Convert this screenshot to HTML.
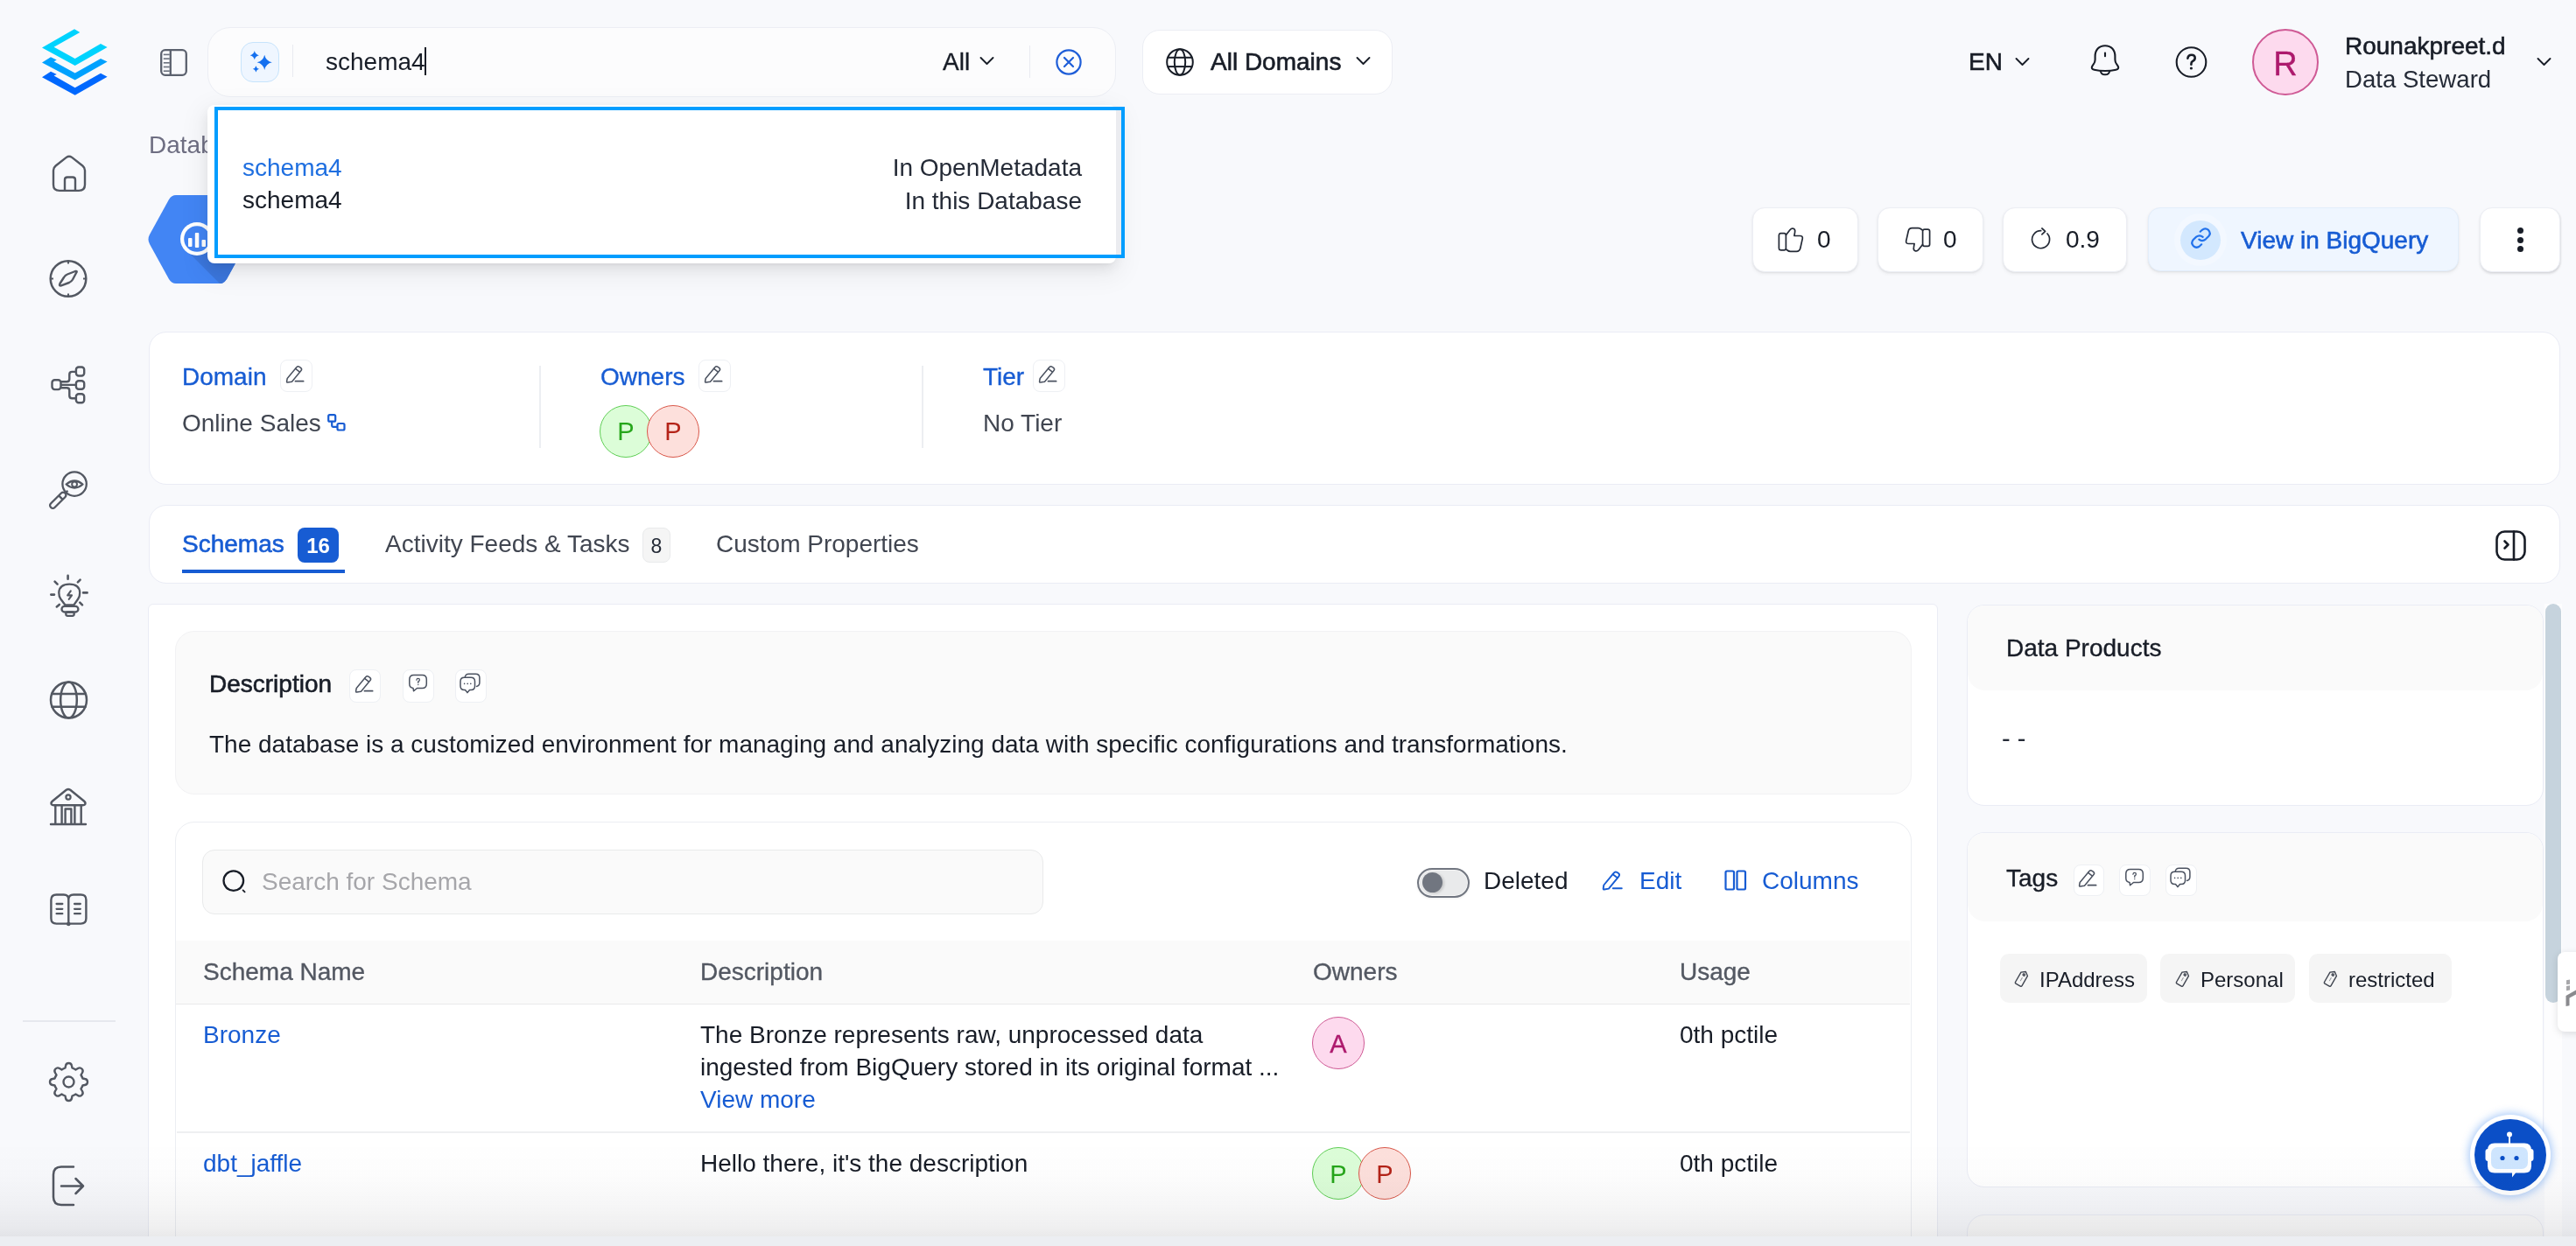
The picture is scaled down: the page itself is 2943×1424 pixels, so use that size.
<!DOCTYPE html>
<html><head><meta charset="utf-8">
<style>
*{box-sizing:border-box;margin:0;padding:0}
html,body{width:2943px;height:1424px;overflow:hidden;background:#f8f9fc;font-family:"Liberation Sans",sans-serif;color:#181d27}
.a{position:absolute}
.t{position:absolute;white-space:nowrap;font-size:28px;line-height:28px;will-change:transform;margin-top:0.8px}
.sb{-webkit-text-stroke:0.6px currentColor}
.md{-webkit-text-stroke:0.35px currentColor}
.card{position:absolute;background:#fff;border:1.5px solid #eaecf5;border-radius:20px}
.ib{position:absolute;background:#fff;border:1.5px solid #eef0f4;border-radius:8px}
svg{position:absolute;overflow:visible}
</style></head><body>

<!-- ============ SIDEBAR ============ -->
<svg style="left:48px;top:33px" width="76" height="77" viewBox="0 0 76 77">
  <path d="M37 0.3 L43.3 3.9 L13.6 20.7 L37.7 34 L67 17.1 L74.6 21.1 L37.7 42 L0 21.5 Z" fill="#00d3fe"/>
  <path d="M10 32.3 L16.8 35.6 L13.6 37.2 L37.7 50.4 L67 34 L74.6 37.6 L37.7 58.4 L0 38.4 Z" fill="#00a1fe"/>
  <path d="M10 48.8 L16.8 52 L13.6 53.6 L37.7 67.3 L67 50.8 L74.6 54.8 L37.7 75.7 L0 55.2 Z" fill="#0068fe"/>
</svg>

<!-- panel toggle -->
<svg style="left:183px;top:56px" width="31" height="31" viewBox="0 0 31 31" fill="none" stroke="#5b616e" stroke-width="2.3">
  <rect x="1.2" y="1.2" width="28.6" height="28.6" rx="4.5"/>
  <line x1="11.8" y1="1.2" x2="11.8" y2="29.8"/>
  <g stroke-width="1.6" stroke="#6b717d"><line x1="3.8" y1="6.4" x2="10.8" y2="6.4"/><line x1="3.8" y1="11.1" x2="10.8" y2="11.1"/><line x1="3.8" y1="15.8" x2="10.8" y2="15.8"/><line x1="3.8" y1="20.5" x2="10.8" y2="20.5"/><line x1="3.8" y1="25.2" x2="10.8" y2="25.2"/></g>
</svg>

<!-- ============ TOP BAR ============ -->
<div class="a" style="left:237px;top:31px;width:1038px;height:80px;background:#fcfcfd;border:1.5px solid #eceef4;border-radius:26px"></div>
<div class="a" style="left:275px;top:48px;width:44px;height:46px;background:#eff6ff;border:1.5px solid #c7e4fc;border-radius:14px"></div>
<svg style="left:275px;top:48px" width="44" height="46" viewBox="0 0 44 46"><path d="M27.2 14.700000000000001 Q28.747999999999998 21.752000000000002 35.8 23.3 Q28.747999999999998 24.848 27.2 31.9 Q25.652 24.848 18.6 23.3 Q25.652 21.752000000000002 27.2 14.700000000000001Z M15.8 10.1 Q16.718 14.282 20.9 15.2 Q16.718 16.118 15.8 20.299999999999997 Q14.882000000000001 16.118 10.700000000000001 15.2 Q14.882000000000001 14.282 15.8 10.1Z M17.4 27.2 Q18.048 30.152 21.0 30.8 Q18.048 31.448 17.4 34.4 Q16.752 31.448 13.799999999999999 30.8 Q16.752 30.152 17.4 27.2Z" fill="#1570ef"/></svg>
<div class="a" style="left:333.5px;top:51px;width:1.5px;height:37px;background:#e9eaf0"></div>
<div class="t" style="left:372px;top:55.9px;color:#181d27">schema4</div>
<div class="a" style="left:485.2px;top:54px;width:1.8px;height:32px;background:#181d27"></div>

<div class="t md" style="left:1077px;top:56px;color:#181d27">All</div>
<svg style="left:1119px;top:64px" width="18" height="11" viewBox="0 0 18 11" fill="none" stroke="#181d27" stroke-width="1.9" stroke-linecap="round" stroke-linejoin="round"><path d="M1.5 2 L8.5 9 L15.5 2"/></svg>
<div class="a" style="left:1175.5px;top:52px;width:1.5px;height:37px;background:#e9eaf0"></div>
<svg style="left:1206px;top:56px" width="30" height="30" viewBox="0 0 30 30" fill="none" stroke="#1f5ed8" stroke-width="2.2" stroke-linecap="round"><circle cx="15" cy="15" r="13.6"/><path d="M10 10 L20 20 M20 10 L10 20"/></svg>

<div class="a" style="left:1305px;top:34px;width:286px;height:74px;background:#fff;border:1.5px solid #eceef4;border-radius:20px"></div>
<svg style="left:1332px;top:55px" width="32" height="32" viewBox="0 0 32 32" fill="none" stroke="#181d27" stroke-width="2"><circle cx="16" cy="16" r="14.8"/><ellipse cx="16" cy="16" rx="6.2" ry="14.8"/><line x1="2" y1="10.8" x2="30" y2="10.8"/><line x1="2" y1="21.1" x2="30" y2="21.1"/></svg>
<div class="t sb" style="left:1383px;top:56.7px;color:#181d27">All Domains</div>
<svg style="left:1549px;top:64px" width="18" height="11" viewBox="0 0 18 11" fill="none" stroke="#181d27" stroke-width="1.9" stroke-linecap="round" stroke-linejoin="round"><path d="M1.5 2 L8.5 9 L15.5 2"/></svg>

<div class="t sb" style="left:2249px;top:56.3px;color:#181d27">EN</div>
<svg style="left:2302px;top:65px" width="18" height="11" viewBox="0 0 18 11" fill="none" stroke="#181d27" stroke-width="1.9" stroke-linecap="round" stroke-linejoin="round"><path d="M1.5 2 L8.5 9 L15.5 2"/></svg>
<svg style="left:2388px;top:51px" width="34" height="36" viewBox="0 0 34 36" fill="none" stroke="#181d27" stroke-width="2.1" stroke-linejoin="round" stroke-linecap="round"><path d="M17 1.3 C10 1.3 5.6 6 5.6 13.5 V17.3 Q5.6 20 3.8 22.3 L2.3 24.6 Q0.6 27.8 4.6 28.7 Q10 30 17 30 Q24 30 29.4 28.7 Q33.4 27.8 31.7 24.6 L30.2 22.3 Q28.4 20 28.4 17.3 V13.5 C28.4 6 24 1.3 17 1.3Z"/><path d="M11.8 30 Q12.3 34.3 17 34.3 Q21.7 34.3 22.2 30"/><path d="M17 9.6 V13.2"/></svg>
<svg style="left:2485px;top:53px" width="37" height="37" viewBox="0 0 37 37" fill="none" stroke="#181d27" stroke-width="2.1"><circle cx="18.5" cy="18" r="16.8"/><path d="M14.4 13.6 Q15 9.8 18.7 9.8 Q22.7 9.8 22.7 13.3 Q22.7 15.8 19.8 17.2 Q18.4 18 18.4 20.2 V20.8" stroke-width="2.6" stroke-linecap="round" stroke-linejoin="round"/><circle cx="18.4" cy="25" r="1.6" fill="#181d27" stroke="none"/></svg>
<div class="a" style="left:2573px;top:33px;width:76px;height:76px;border-radius:50%;background:#fddaee;border:2px solid #cf5a95"></div>
<div class="t md" style="left:2573px;width:76px;text-align:center;top:53.5px;font-size:38px;line-height:38px;color:#ad1a6d">R</div>
<div class="t sb" style="left:2679px;top:38.6px;color:#181d27">Rounakpreet.d</div>
<div class="t" style="left:2679px;top:76px;font-size:27.6px;color:#252b37">Data Steward</div>
<svg style="left:2898px;top:65px" width="18" height="11" viewBox="0 0 18 11" fill="none" stroke="#181d27" stroke-width="1.9" stroke-linecap="round" stroke-linejoin="round"><path d="M1.5 2 L8.5 9 L15.5 2"/></svg>


<!-- ============ HEADER ============ -->
<div class="t" style="left:170px;top:151px;color:#6e6e82">Databases</div>
<svg style="left:169px;top:223px" width="114" height="101" viewBox="0 0 114 101">
  <defs><clipPath id="hx"><path d="M32 0 H82 Q87 0 90 5 L112 45 Q115 50.5 112 56 L90 96 Q87 101 82 101 H32 Q27 101 24 96 L2 56 Q-1 50.5 2 45 L24 5 Q27 0 32 0Z"/></clipPath></defs>
  <g clip-path="url(#hx)">
  <rect x="0" y="0" width="114" height="101" fill="#4285f4"/>
  <path d="M47 66 L82 101 H120 V40 L72 40 Z" fill="#3b76dc"/>
  </g>
  <circle cx="56" cy="50" r="19" fill="#fff"/>
  <circle cx="56" cy="50" r="14.8" fill="#4285f4"/>
  <rect x="46" y="49" width="4.5" height="10" rx="1" fill="#fff"/><rect x="53.8" y="43" width="4.5" height="17" rx="1" fill="#fff"/><rect x="61.5" y="51" width="4.5" height="8" rx="1" fill="#fff"/>
</svg>

<!-- dropdown -->
<div class="a" style="left:237px;top:120px;width:1038px;height:181px;background:#fff;border-radius:8px;box-shadow:0 6px 16px rgba(0,0,0,0.08),0 3px 6px -4px rgba(0,0,0,0.12),0 9px 28px 8px rgba(0,0,0,0.05)"></div>
<div class="a" style="left:1275px;top:126px;width:6px;height:165px;background:#ebecf0"></div>
<div class="a" style="left:245px;top:122px;width:1040px;height:173px;border:4px solid #009dff"></div>
<div class="t" style="left:277px;top:177px;color:#1f6fe0">schema4</div>
<div class="t" style="left:277px;top:214.3px;color:#181d27">schema4</div>
<div class="t" style="left:900px;width:336px;text-align:right;top:177.3px;color:#252b37">In OpenMetadata</div>
<div class="t" style="left:900px;width:336px;text-align:right;top:214.9px;color:#252b37">In this Database</div>

<!-- action buttons -->
<div class="a" style="left:2001.5px;top:237px;width:121px;height:73.5px;background:#fff;border:1.5px solid #eceef4;border-radius:14px;box-shadow:0 1px 2px rgba(10,13,18,0.06),0 2px 4px rgba(10,13,18,0.06)"></div>
<svg style="left:2031px;top:259px" width="31" height="30" viewBox="0 0 31 30" fill="none" stroke="#252b37" stroke-width="1.7" stroke-linejoin="round" stroke-linecap="round"><rect x="1.4" y="7.6" width="8" height="19.3" rx="2.2"/><path d="M9.5 9.5 L14 3.8 Q15.8 1.5 18 2.3 Q20.3 3.3 19.6 6.3 L18.9 10.5 H25.3 Q28.8 10.5 28.3 13.6 L25.8 24.8 Q25 28.3 21.5 28.3 H14.5 Q12.5 28.3 11 27 L9.5 25.8"/></svg>
<div class="t" style="left:2076px;top:259.3px;color:#181d27">0</div>
<div class="a" style="left:2145px;top:237px;width:120.5px;height:73.5px;background:#fff;border:1.5px solid #eceef4;border-radius:14px;box-shadow:0 1px 2px rgba(10,13,18,0.06),0 2px 4px rgba(10,13,18,0.06)"></div>
<svg style="left:2175px;top:259px" width="31" height="30" viewBox="0 0 31 30" fill="none" stroke="#252b37" stroke-width="1.7" stroke-linejoin="round" stroke-linecap="round"><g transform="translate(31,30) rotate(180)"><rect x="1.4" y="7.6" width="8" height="19.3" rx="2.2"/><path d="M9.5 9.5 L14 3.8 Q15.8 1.5 18 2.3 Q20.3 3.3 19.6 6.3 L18.9 10.5 H25.3 Q28.8 10.5 28.3 13.6 L25.8 24.8 Q25 28.3 21.5 28.3 H14.5 Q12.5 28.3 11 27 L9.5 25.8"/></g></svg>
<div class="t" style="left:2220px;top:259.3px;color:#181d27">0</div>
<div class="a" style="left:2288px;top:237px;width:141.5px;height:73.5px;background:#fff;border:1.5px solid #eceef4;border-radius:14px;box-shadow:0 1px 2px rgba(10,13,18,0.06),0 2px 4px rgba(10,13,18,0.06)"></div>
<svg style="left:2319px;top:259px" width="26" height="28" viewBox="0 0 26 28" fill="none" stroke="#252b37" stroke-width="1.7" stroke-linecap="round" stroke-linejoin="round"><path d="M12.7 4.7 A10 10 0 1 0 20 8"/><path d="M13.9 2 L17.6 5.4 L13.9 8.8"/></svg>
<div class="t" style="left:2360px;top:259.3px;color:#181d27">0.9</div>
<div class="a" style="left:2454px;top:237px;width:355px;height:73px;background:#eff6ff;border:1.5px solid #e3eefb;border-radius:14px;box-shadow:0 1px 2px rgba(10,13,18,0.06),0 2px 4px rgba(10,13,18,0.06)"></div>
<div class="a" style="left:2484px;top:244px;width:60px;height:60px;border-radius:50%;background:#f3f8ff"></div>
<div class="a" style="left:2491px;top:251.5px;width:46px;height:45.5px;border-radius:50%;background:#d3e8fe"></div>
<svg style="left:2502px;top:260px" width="25" height="25" viewBox="0 0 25 25" fill="none" stroke="#2272eb" stroke-width="2.2" stroke-linecap="round"><path d="M11.7 4.7 L13.8 2.8 Q17.5 -0.3 21.1 2.9 Q24.3 6.5 21.3 10 L18 13.3 Q14 16.5 10.3 13.7"/><path d="M14.7 10.9 Q11 7.8 7.2 10.7 L3.7 14 Q0.7 17.5 3.9 21.1 Q7.5 24.3 11 21.3 L13.2 19.3"/></svg>
<div class="t sb" style="left:2560px;top:259.9px;color:#175cd3">View in BigQuery</div>
<div class="a" style="left:2833px;top:237px;width:92px;height:73.5px;background:#fff;border:1.5px solid #eceef4;border-radius:14px;box-shadow:0 2px 3px rgba(10,13,18,0.10),1px 1px 2px rgba(10,13,18,0.06)"></div>
<div class="a" style="left:2875.5px;top:260px;width:7px;height:7px;border-radius:50%;background:#181d27"></div>
<div class="a" style="left:2875.5px;top:270.5px;width:7px;height:7px;border-radius:50%;background:#181d27"></div>
<div class="a" style="left:2875.5px;top:281px;width:7px;height:7px;border-radius:50%;background:#181d27"></div>

<!-- ============ SIDEBAR ICONS ============ -->
<svg style="left:56px;top:176px" width="45" height="45" viewBox="0 0 45 45" fill="none" stroke="#535862" stroke-width="2.4" stroke-linejoin="round"><path d="M5 18.8 Q5 15.6 7.6 13.5 L19.8 3.9 Q23 1.5 26.2 3.9 L38.4 13.5 Q41 15.6 41 18.8 V35 Q41 41.9 34.1 41.9 H11.9 Q5 41.9 5 35 Z"/><path d="M18 41.9 V29.5 Q18 26.5 21 26.5 H27 Q30 26.5 30 29.5 V41.9"/></svg>
<svg style="left:56px;top:296px" width="45" height="45" viewBox="0 0 45 45" fill="none" stroke="#535862" stroke-width="2.5" stroke-linejoin="round"><circle cx="22" cy="22.5" r="20.3"/><path d="M31 16 Q33 13.5 30 14 L21 17.5 Q18.5 18.5 17 21 L12.5 28 Q11 31 14 30.3 L23 27 Q25.5 26 27 23.5 Z" stroke-width="2.4"/><path d="M22 2.2 V5.5 M22 39.5 V42.8 M1.7 22.5 H5 M39 22.5 H42.3" stroke-width="2"/></svg>
<svg style="left:56px;top:416px" width="45" height="47" viewBox="0 0 45 47" fill="none" stroke="#535862" stroke-width="2.4" stroke-linejoin="round"><rect x="3.5" y="18.2" width="10" height="10.9" rx="3"/><rect x="30.9" y="3.5" width="9.3" height="10" rx="3"/><rect x="30.9" y="19.2" width="9.3" height="9.6" rx="3"/><rect x="30.9" y="34.3" width="9.3" height="10" rx="3"/><path d="M13.5 23.9 H30.9 M13.5 20.2 H20.3 Q23.3 20.2 23.3 17.2 V11.9 Q23.3 8.9 26.3 8.9 H30.9 M13.5 27.3 H20.3 Q23.3 27.3 23.3 30.3 V36.3 Q23.3 39.3 26.3 39.3 H30.9"/></svg>
<svg style="left:56px;top:537px" width="46" height="46" viewBox="0 0 46 46" fill="none" stroke="#535862" stroke-width="2.3" stroke-linejoin="round"><circle cx="29.1" cy="16.1" r="13.7"/><g transform="rotate(-45 10.6 34.4)"><rect x="-1.4" y="31.2" width="23" height="6.4" rx="3"/><path d="M14.5 31.2 V37.6"/></g><path d="M19.4 25.8 L21.4 23.8"/><path d="M19.6 16.5 Q29.1 8.5 38.6 16.5 Q29.1 24.5 19.6 16.5Z" stroke-width="2.2"/><circle cx="29.1" cy="16.5" r="2.9" stroke-width="2"/></svg>
<svg style="left:56px;top:655px" width="46" height="51" viewBox="0 0 46 51" fill="none" stroke="#535862" stroke-width="2.3" stroke-linejoin="round" stroke-linecap="round"><path d="M18.3 36.3 L13.3 29.5 Q11.2 26.5 11.3 22.3 Q11.8 12.7 23.3 12.7 Q34.8 12.7 35.2 22.3 Q35.3 26.5 33.2 29.5 L28.4 36.3 Z"/><rect x="14.5" y="37.8" width="18.9" height="6.7" rx="3.3"/><rect x="19.3" y="44.5" width="9.4" height="4.3" rx="2"/><path d="M24.8 20.3 L21.2 25.4 H26 L22.7 29.8" stroke-width="2.1"/><path d="M21.6 2.9 V6.8 M6.6 9.6 L9.6 12.6 M35.6 7.7 L32.9 10.4 M2.3 24.6 H6 M39.1 22.4 H43.6 M8.8 38.4 L11.8 35.9 M35.3 33.7 L38 36.4" stroke-width="2.6"/></svg>
<svg style="left:56px;top:778px" width="46" height="46" viewBox="0 0 46 46" fill="none" stroke="#535862" stroke-width="2.5"><circle cx="22.5" cy="22" r="20.5"/><ellipse cx="22.5" cy="22" rx="9.3" ry="20.5"/><line x1="2.5" y1="15" x2="42.5" y2="15"/><line x1="2.5" y1="29.8" x2="42.5" y2="29.8"/></svg>
<svg style="left:56px;top:900px" width="45" height="45" viewBox="0 0 45 45" fill="none" stroke="#535862" stroke-width="2.4" stroke-linejoin="round" stroke-linecap="round"><path d="M4 15.5 Q1.8 17.3 2.8 19.2 Q3.6 20.2 5.5 20.2 H38.5 Q40.4 20.2 41.2 19.2 Q42.2 17.3 40 15.5 L24.3 2.8 Q22 1.3 19.7 2.8 Z"/><circle cx="22" cy="11" r="2.6" stroke-width="2.2"/><path d="M7.3 20.2 V41.5 M14.6 20.2 V41.5 M29.4 20.2 V41.5 M36.7 20.2 V41.5 M2 42 H42"/><path d="M18.6 41.5 V24.5 H25.4 V41.5"/></svg>
<svg style="left:56px;top:1020px" width="46" height="40" viewBox="0 0 46 40" fill="none" stroke="#535862" stroke-width="2.4" stroke-linejoin="round" stroke-linecap="round"><path d="M22.3 35.2 V8 Q22.3 2.5 16.8 2.5 H8.5 Q2.4 2.5 2.4 8.6 V29.5 Q2.4 35.6 8.5 35.6 H36.3 Q42.4 35.6 42.4 29.5 V8.6 Q42.4 2.5 36.3 2.5 H28 Q22.3 2.5 22.3 8"/><path d="M8.6 13 H15.3 M8.6 18.8 H15.3 M8.6 24.2 H15.3 M29.1 13 H35.8 M29.1 18.8 H35.8 M29.1 24.2 H35.8" stroke-width="2.3"/><circle cx="22.3" cy="36" r="2.3" fill="#535862" stroke="none"/></svg>
<div class="a" style="left:26px;top:1166px;width:106px;height:1.5px;background:#e6e8ee"></div>
<svg style="left:55px;top:1213px" width="47" height="47" viewBox="0 0 47 47" fill="none" stroke="#535862" stroke-width="2.4" stroke-linejoin="round"><path d="M23.5 2 Q26.5 2 27 5 L27.5 7.5 Q30 8.5 31.5 9.5 L34 8 Q36.5 6.5 38.5 8.5 Q40.5 10.5 39 13 L37.5 15.5 Q38.5 17 39.5 19.5 L42 20 Q45 20.5 45 23.5 Q45 26.5 42 27 L39.5 27.5 Q38.5 30 37.5 31.5 L39 34 Q40.5 36.5 38.5 38.5 Q36.5 40.5 34 39 L31.5 37.5 Q30 38.5 27.5 39.5 L27 42 Q26.5 45 23.5 45 Q20.5 45 20 42 L19.5 39.5 Q17 38.5 15.5 37.5 L13 39 Q10.5 40.5 8.5 38.5 Q6.5 36.5 8 34 L9.5 31.5 Q8.5 30 7.5 27.5 L5 27 Q2 26.5 2 23.5 Q2 20.5 5 20 L7.5 19.5 Q8.5 17 9.5 15.5 L8 13 Q6.5 10.5 8.5 8.5 Q10.5 6.5 13 8 L15.5 9.5 Q17 8.5 19.5 7.5 L20 5 Q20.5 2 23.5 2Z"/><circle cx="23.5" cy="23.5" r="6"/></svg>
<svg style="left:59px;top:1332px" width="39" height="47" viewBox="0 0 39 47" fill="none" stroke="#535862" stroke-width="2.5" stroke-linecap="round" stroke-linejoin="round"><path d="M25 1.5 H11 Q2 1.5 2 10.5 V36 Q2 45 11 45 H25"/><path d="M11 23.5 H36 M27.5 15 L36 23.5 L27.5 32"/></svg>

<!-- ============ INFO CARD ============ -->
<div class="card" style="left:170px;top:379.3px;width:2755px;height:175px"></div>
<div class="t md" style="left:208px;top:415.8px;color:#175cd3">Domain</div>
<div class="ib" style="left:319.5px;top:411px;width:37px;height:37px"></div>
<svg style="left:324.5px;top:416px" width="26" height="24" viewBox="0 0 26 24" fill="none" stroke="#4b5260" stroke-width="1.5" stroke-linejoin="round" stroke-linecap="round"><path d="M3.2 16.5 L13.8 3.8 Q15.3 2 17.2 3.3 L18.6 4.3 Q20.4 5.8 19 7.6 L8.5 20.3 L3.6 21.1 Q2.5 21.2 2.6 20 Z"/><path d="M12.6 5.3 L17.4 9.1"/><path d="M12.5 19.7 H21.6" stroke-width="1.8"/></svg>
<div class="t" style="left:208px;top:468.9px;color:#414651">Online Sales</div>
<svg style="left:374px;top:473px" width="21" height="20" viewBox="0 0 21 20" fill="none" stroke="#175cd3" stroke-width="2.2" stroke-linejoin="round"><rect x="1.2" y="1.2" width="8" height="7.5" rx="1.5"/><rect x="11.5" y="11" width="8" height="7.5" rx="1.5"/><path d="M5.2 8.7 V13.5 Q5.2 14.8 6.5 14.8 H11.5"/></svg>
<div class="a" style="left:616px;top:418px;width:1.5px;height:94px;background:#eceef2"></div>
<div class="t md" style="left:685.7px;top:415.8px;color:#175cd3">Owners</div>
<div class="ib" style="left:798px;top:411px;width:37px;height:37px"></div>
<svg style="left:803.0px;top:416px" width="26" height="24" viewBox="0 0 26 24" fill="none" stroke="#4b5260" stroke-width="1.5" stroke-linejoin="round" stroke-linecap="round"><path d="M3.2 16.5 L13.8 3.8 Q15.3 2 17.2 3.3 L18.6 4.3 Q20.4 5.8 19 7.6 L8.5 20.3 L3.6 21.1 Q2.5 21.2 2.6 20 Z"/><path d="M12.6 5.3 L17.4 9.1"/><path d="M12.5 19.7 H21.6" stroke-width="1.8"/></svg>
<div class="a" style="left:685px;top:463px;width:60px;height:60px;border-radius:50%;background:#dcfdd8;border:1.5px solid #5fcf55"></div>
<div class="a" style="left:739px;top:463px;width:60px;height:60px;border-radius:50%;background:#fde0dc;border:1.5px solid #d9584a"></div>
<div class="t" style="left:685px;width:60px;text-align:center;top:478px;color:#26a61b;font-size:29px;line-height:29px">P</div>
<div class="t" style="left:739px;width:60px;text-align:center;top:478px;color:#b42318;font-size:29px;line-height:29px">P</div>
<div class="a" style="left:1053px;top:418px;width:1.5px;height:94px;background:#eceef2"></div>
<div class="t md" style="left:1123px;top:415.8px;color:#175cd3">Tier</div>
<div class="ib" style="left:1180px;top:411px;width:37px;height:37px"></div>
<svg style="left:1185.0px;top:416px" width="26" height="24" viewBox="0 0 26 24" fill="none" stroke="#4b5260" stroke-width="1.5" stroke-linejoin="round" stroke-linecap="round"><path d="M3.2 16.5 L13.8 3.8 Q15.3 2 17.2 3.3 L18.6 4.3 Q20.4 5.8 19 7.6 L8.5 20.3 L3.6 21.1 Q2.5 21.2 2.6 20 Z"/><path d="M12.6 5.3 L17.4 9.1"/><path d="M12.5 19.7 H21.6" stroke-width="1.8"/></svg>
<div class="t" style="left:1123px;top:468.9px;color:#414651">No Tier</div>

<!-- ============ TABS ============ -->
<div class="card" style="left:170px;top:577px;width:2755px;height:90px"></div>
<div class="t sb" style="left:208px;top:607.4px;color:#175cd3">Schemas</div>
<div class="a" style="left:340px;top:603px;width:47px;height:40px;border-radius:8px;background:#175cd3"></div>
<div class="t" style="left:340px;width:47px;text-align:center;top:611px;font-weight:bold;font-size:24px;line-height:24px;color:#fff">16</div>
<div class="a" style="left:208px;top:651px;width:186px;height:4px;background:#175cd3"></div>
<div class="t" style="left:440px;top:607.3px;color:#414651">Activity Feeds &amp; Tasks</div>
<div class="a" style="left:733.5px;top:603px;width:32px;height:40px;border-radius:8px;background:#f5f5f5;border:1.5px solid #e9eaeb"></div>
<div class="t" style="left:733.5px;width:32px;text-align:center;top:612px;font-size:23px;line-height:23px;color:#252b37">8</div>
<div class="t" style="left:818px;top:607.3px;color:#414651">Custom Properties</div>
<svg style="left:2851px;top:606px" width="35" height="35" viewBox="0 0 35 35" fill="none" stroke="#181d27" stroke-width="2.6" stroke-linejoin="round" stroke-linecap="round"><rect x="1.5" y="1.5" width="32" height="32" rx="9"/><path d="M21 1.5 V33.5"/><path d="M10.5 12.5 L14.5 16.5 L10.5 20.5"/></svg>

<!-- ============ LEFT CONTENT CARD ============ -->
<div class="a" style="left:169.3px;top:690px;width:2045px;height:760px;background:#fff;border:1.5px solid #eaecf5;border-radius:6px"></div>
<div class="a" style="left:199.5px;top:721px;width:1984px;height:187px;background:#fafafa;border:1.5px solid #f2f2f4;border-radius:22px"></div>
<div class="t sb" style="left:239px;top:767.3px;color:#181d27">Description</div>
<div class="ib" style="left:399px;top:765px;width:36px;height:37.5px"></div><svg style="left:404px;top:770px" width="26" height="24" viewBox="0 0 26 24" fill="none" stroke="#4b5260" stroke-width="1.5" stroke-linejoin="round" stroke-linecap="round"><path d="M3.2 16.5 L13.8 3.8 Q15.3 2 17.2 3.3 L18.6 4.3 Q20.4 5.8 19 7.6 L8.5 20.3 L3.6 21.1 Q2.5 21.2 2.6 20 Z"/><path d="M12.6 5.3 L17.4 9.1"/><path d="M12.5 19.7 H21.6" stroke-width="1.8"/></svg>
<div class="ib" style="left:459.5px;top:765px;width:36.5px;height:37.5px"></div><svg style="left:465px;top:770px" width="26" height="24" viewBox="0 0 26 24" fill="none" stroke="#4b5260" stroke-width="1.5" stroke-linejoin="round" stroke-linecap="round"><path d="M7.8 1.5 H17.3 Q22.3 1.5 22.3 6.5 V11.5 Q22.3 16.5 17.3 16.5 H11.5 L7.6 19.8 L7 16.4 Q2.8 16 2.8 11.5 V6.5 Q2.8 1.5 7.8 1.5Z"/><path d="M10.9 7.2 Q11.1 5.3 12.7 5.3 Q14.4 5.3 14.4 6.9 Q14.4 8.1 12.8 8.9 V10.4" stroke-width="1.3"/><circle cx="12.8" cy="12.5" r="0.7" fill="#4b5260" stroke="none"/></svg>
<div class="ib" style="left:519.5px;top:765px;width:36px;height:37.5px"></div><svg style="left:524px;top:769px" width="26" height="24" viewBox="0 0 26 24" fill="none" stroke="#4b5260" stroke-width="1.5" stroke-linejoin="round" stroke-linecap="round"><path d="M7.2 5.3 Q7.6 1.3 11.6 1.3 H19.4 Q23.9 1.3 23.9 5.8 V11 Q23.9 14.8 20.5 15.4"/><path d="M6.5 5.3 H14 Q18.5 5.3 18.5 9.8 V15 Q18.5 19.5 14 19.5 H12.5 L10 22.6 L7.5 19.5 H6.5 Q2 19.5 2 15 V9.8 Q2 5.3 6.5 5.3Z"/><circle cx="6.6" cy="12.4" r="0.8" fill="#4b5260" stroke="none"/><circle cx="10.2" cy="12.4" r="0.8" fill="#4b5260" stroke="none"/><circle cx="13.8" cy="12.4" r="0.8" fill="#4b5260" stroke="none"/></svg>
<div class="t" style="left:239px;top:835.9px;color:#181d27">The database is a customized environment for managing and analyzing data with specific configurations and transformations.</div>

<!-- table card -->
<div class="a" style="left:199.5px;top:939px;width:1984px;height:520px;background:#fff;border:1.5px solid #eceef2;border-radius:22px"></div>
<div class="a" style="left:231px;top:970.5px;width:961px;height:74px;background:#fafafa;border:1.5px solid #e9eaeb;border-radius:14px"></div>
<svg style="left:254px;top:994px" width="28" height="28" viewBox="0 0 28 28" fill="none" stroke="#181d27" stroke-width="2.3" stroke-linecap="round"><circle cx="12.8" cy="12.6" r="11.3"/><path d="M23.6 23.4 L25.6 25.4" stroke-width="1.8"/></svg>
<div class="t" style="left:299px;top:993px;color:#a6a6aa">Search for Schema</div>
<div class="a" style="left:1619px;top:992px;width:60px;height:34px;border-radius:17px;background:#e9eaeb;border:2px solid #717680;box-shadow:inset 0 0 0 1px #f5f5f5,0 1px 3px rgba(0,0,0,0.08)"></div>
<div class="a" style="left:1625px;top:997px;width:23px;height:23px;border-radius:50%;background:#717680;box-shadow:2px 1px 3px rgba(0,0,0,0.15)"></div>
<div class="t" style="left:1695.2px;top:992.1px;color:#181d27">Deleted</div>
<svg style="left:1829px;top:993px" width="26" height="26" viewBox="0 0 26 26" fill="none" stroke="#175cd3" stroke-width="1.9" stroke-linejoin="round" stroke-linecap="round"><path d="M3.3 18.5 L14.8 4.6 Q16.4 2.6 18.5 4 L20 5.1 Q21.9 6.7 20.4 8.7 L8.9 22.6 L3.8 23.5 Q2.6 23.6 2.7 22.3 Z"/><path d="M13.6 6.2 L18.9 10.3"/><path d="M13.8 22.2 H23.8"/></svg>
<div class="t" style="left:1872.5px;top:992.1px;color:#175cd3">Edit</div>
<svg style="left:1970px;top:994px" width="26" height="24" viewBox="0 0 26 24" fill="none" stroke="#175cd3" stroke-width="2.2" stroke-linejoin="round"><rect x="1.5" y="1.5" width="9.5" height="21" rx="1.5"/><rect x="14.5" y="1.5" width="9.5" height="21" rx="1.5"/></svg>
<div class="t" style="left:2012.5px;top:992.1px;color:#175cd3">Columns</div>

<div class="a" style="left:201px;top:1075px;width:1981px;height:73px;background:#fafafa;border-bottom:1.5px solid #e9eaeb"></div>
<div class="t md" style="left:232px;top:1095.9px;color:#535862">Schema Name</div>
<div class="t md" style="left:800px;top:1095.9px;color:#535862">Description</div>
<div class="t md" style="left:1500px;top:1095.9px;color:#535862">Owners</div>
<div class="t md" style="left:1919px;top:1095.9px;color:#535862">Usage</div>

<div class="t" style="left:232px;top:1168.2px;color:#175cd3">Bronze</div>
<div class="t" style="left:800px;top:1168.2px;color:#181d27">The Bronze represents raw, unprocessed data</div>
<div class="t" style="left:800px;top:1204.9px;color:#181d27">ingested from BigQuery stored in its original format ...</div>
<div class="t" style="left:800px;top:1242.2px;color:#175cd3">View more</div>
<div class="a" style="left:1499px;top:1162px;width:60px;height:60px;border-radius:50%;background:#fddaee;border:1.5px solid #cf5a95"></div>
<div class="t md" style="left:1499px;width:60px;text-align:center;top:1178px;font-size:29px;line-height:29px;color:#ad1a6d">A</div>
<div class="t" style="left:1919px;top:1168.3px;color:#181d27">0th pctile</div>
<div class="a" style="left:202px;top:1293px;width:1980px;height:1.5px;background:#eeeff1"></div>

<div class="t" style="left:232px;top:1315.5px;color:#175cd3">dbt_jaffle</div>
<div class="t" style="left:800px;top:1315.3px;color:#181d27">Hello there, it's the description</div>
<div class="a" style="left:1499px;top:1311px;width:60px;height:60px;border-radius:50%;background:#dcfdd8;border:1.5px solid #5fcf55"></div>
<div class="a" style="left:1552px;top:1311px;width:60px;height:60px;border-radius:50%;background:#fde0dc;border:1.5px solid #d9584a"></div>
<div class="t" style="left:1499px;width:60px;text-align:center;top:1327px;color:#26a61b;font-size:29px;line-height:29px">P</div>
<div class="t" style="left:1552px;width:60px;text-align:center;top:1327px;color:#b42318;font-size:29px;line-height:29px">P</div>
<div class="t" style="left:1919px;top:1315.3px;color:#181d27">0th pctile</div>

<!-- ============ RIGHT PANEL ============ -->
<div class="a" style="left:2246.5px;top:690.5px;width:2659.5px;width:659.5px;height:230.5px;background:#fff;border:1.5px solid #eaecf5;border-radius:20px;overflow:hidden">
  <div class="a" style="left:0;top:0;width:100%;height:97px;background:#fafafa;border-radius:0 0 20px 20px"></div>
</div>
<div class="t md" style="left:2292px;top:725.8px;color:#181d27">Data Products</div>
<div class="t" style="left:2287px;top:829px;font-size:29px;color:#252b37">- -</div>

<div class="a" style="left:2246.5px;top:951px;width:659.5px;height:405.5px;background:#fff;border:1.5px solid #eaecf5;border-radius:20px;overflow:hidden">
  <div class="a" style="left:0;top:0;width:100%;height:101px;background:#fafafa;border-radius:0 0 20px 20px"></div>
</div>
<div class="t md" style="left:2292px;top:989.5px;color:#181d27">Tags</div>
<div class="ib" style="left:2368.5px;top:987.5px;width:35.5px;height:36px"></div><svg style="left:2373px;top:992px" width="26" height="24" viewBox="0 0 26 24" fill="none" stroke="#4b5260" stroke-width="1.5" stroke-linejoin="round" stroke-linecap="round"><path d="M3.2 16.5 L13.8 3.8 Q15.3 2 17.2 3.3 L18.6 4.3 Q20.4 5.8 19 7.6 L8.5 20.3 L3.6 21.1 Q2.5 21.2 2.6 20 Z"/><path d="M12.6 5.3 L17.4 9.1"/><path d="M12.5 19.7 H21.6" stroke-width="1.8"/></svg>
<div class="ib" style="left:2421px;top:987.5px;width:36px;height:36px"></div><svg style="left:2426px;top:992px" width="26" height="24" viewBox="0 0 26 24" fill="none" stroke="#4b5260" stroke-width="1.5" stroke-linejoin="round" stroke-linecap="round"><path d="M7.8 1.5 H17.3 Q22.3 1.5 22.3 6.5 V11.5 Q22.3 16.5 17.3 16.5 H11.5 L7.6 19.8 L7 16.4 Q2.8 16 2.8 11.5 V6.5 Q2.8 1.5 7.8 1.5Z"/><path d="M10.9 7.2 Q11.1 5.3 12.7 5.3 Q14.4 5.3 14.4 6.9 Q14.4 8.1 12.8 8.9 V10.4" stroke-width="1.3"/><circle cx="12.8" cy="12.5" r="0.7" fill="#4b5260" stroke="none"/></svg>
<div class="ib" style="left:2473.5px;top:987.5px;width:36px;height:36px"></div><svg style="left:2478px;top:991px" width="26" height="24" viewBox="0 0 26 24" fill="none" stroke="#4b5260" stroke-width="1.5" stroke-linejoin="round" stroke-linecap="round"><path d="M7.2 5.3 Q7.6 1.3 11.6 1.3 H19.4 Q23.9 1.3 23.9 5.8 V11 Q23.9 14.8 20.5 15.4"/><path d="M6.5 5.3 H14 Q18.5 5.3 18.5 9.8 V15 Q18.5 19.5 14 19.5 H12.5 L10 22.6 L7.5 19.5 H6.5 Q2 19.5 2 15 V9.8 Q2 5.3 6.5 5.3Z"/><circle cx="6.6" cy="12.4" r="0.8" fill="#4b5260" stroke="none"/><circle cx="10.2" cy="12.4" r="0.8" fill="#4b5260" stroke="none"/><circle cx="13.8" cy="12.4" r="0.8" fill="#4b5260" stroke="none"/></svg>

<div class="a" style="left:2285px;top:1090px;width:168px;height:56px;border-radius:10px;background:#f5f5f5"></div>
<div class="a" style="left:2468px;top:1090px;width:154px;height:56px;border-radius:10px;background:#f5f5f5"></div>
<div class="a" style="left:2637.5px;top:1090px;width:163.5px;height:56px;border-radius:10px;background:#f5f5f5"></div>
<svg style="left:2301px;top:1108px" width="18" height="20" viewBox="0 0 18 20" fill="none" stroke="#414651" stroke-width="1.4" stroke-linejoin="round"><g transform="translate(9 10) rotate(30) translate(-5 -9.4)"><path d="M5 0.7 L9.3 4 V16.8 Q9.3 18.1 8 18.1 H2 Q0.7 18.1 0.7 16.8 V4 Z"/><circle cx="5" cy="4.8" r="1.1"/><path d="M5 8.5 V13" stroke-width="0.9" opacity="0.6"/></g></svg>
<div class="t" style="left:2330px;top:1107px;font-size:24px;line-height:24px;color:#181d27">IPAddress</div>
<svg style="left:2485px;top:1108px" width="18" height="20" viewBox="0 0 18 20" fill="none" stroke="#414651" stroke-width="1.4" stroke-linejoin="round"><g transform="translate(9 10) rotate(30) translate(-5 -9.4)"><path d="M5 0.7 L9.3 4 V16.8 Q9.3 18.1 8 18.1 H2 Q0.7 18.1 0.7 16.8 V4 Z"/><circle cx="5" cy="4.8" r="1.1"/><path d="M5 8.5 V13" stroke-width="0.9" opacity="0.6"/></g></svg>
<div class="t" style="left:2514px;top:1107px;font-size:24px;line-height:24px;color:#181d27">Personal</div>
<svg style="left:2654px;top:1108px" width="18" height="20" viewBox="0 0 18 20" fill="none" stroke="#414651" stroke-width="1.4" stroke-linejoin="round"><g transform="translate(9 10) rotate(30) translate(-5 -9.4)"><path d="M5 0.7 L9.3 4 V16.8 Q9.3 18.1 8 18.1 H2 Q0.7 18.1 0.7 16.8 V4 Z"/><circle cx="5" cy="4.8" r="1.1"/><path d="M5 8.5 V13" stroke-width="0.9" opacity="0.6"/></g></svg>
<div class="t" style="left:2683px;top:1107px;font-size:24px;line-height:24px;color:#181d27">restricted</div>

<div class="a" style="left:2246.5px;top:1388px;width:659.5px;height:100px;background:#fafafa;border:1.5px solid #eaecf5;border-radius:20px"></div>

<!-- scrollbar -->
<div class="a" style="left:2906.5px;top:690px;width:20px;height:723px;background:#fdfdfe"></div>
<div class="a" style="left:2907.5px;top:690px;width:18.5px;height:456px;background:#c6d3dd;border-radius:10px"></div>
<!-- right edge widget -->
<div class="a" style="left:2922px;top:1088px;width:40px;height:91px;background:#fff;border-radius:8px;box-shadow:0 2px 8px rgba(0,0,0,0.12)"></div>
<svg style="left:2929px;top:1118px" width="14" height="34" viewBox="0 0 14 34" fill="#8a8a8e"><path d="M3 2.3 L7 1.5 V6.8 L3 7.3Z" opacity="0.75"/><path d="M3 9 L7 8.3 V13.6 L3 14.2Z" opacity="0.75"/><path d="M2.5 32 V20 L14 13.5 V18.5 L6.5 22.5 V31.3Z"/></svg>

<!-- bot -->
<div class="a" style="left:2821.5px;top:1273.5px;width:92px;height:92px;border-radius:50%;background:#fff;box-shadow:0 0 10px 2px rgba(21,112,239,0.35)"></div>
<div class="a" style="left:2826.5px;top:1278.5px;width:82px;height:82px;border-radius:50%;background:#0b4fc7"></div>
<svg style="left:2836px;top:1291px" width="62" height="60" viewBox="0 0 62 60" fill="none">
  <line x1="31" y1="6" x2="31" y2="16" stroke="#fff" stroke-width="2"/>
  <circle cx="31" cy="5.5" r="3" fill="#fff"/>
  <rect x="3.5" y="22" width="6" height="14" rx="3" fill="#fff"/>
  <rect x="52.5" y="22" width="6" height="14" rx="3" fill="#fff"/>
  <path d="M14 15.5 H48 Q56 15.5 56 23.5 V41.5 Q56 49.5 48 49.5 H38 L34 54.5 V49.5 H14 Q6 49.5 6 41.5 V23.5 Q6 15.5 14 15.5Z" fill="#fff"/>
  <rect x="10" y="20" width="42" height="25" rx="7" fill="#cfe6ff"/>
  <circle cx="23" cy="32.5" r="2.6" fill="#0b4fc7"/><circle cx="39" cy="32.5" r="2.6" fill="#0b4fc7"/>
</svg>

<!-- bottom fade + strip -->
<div class="a" style="left:0;top:1305px;width:2943px;height:108px;background:linear-gradient(to bottom,rgba(20,20,30,0) 0%,rgba(20,20,30,0.012) 35%,rgba(20,20,30,0.035) 65%,rgba(20,20,30,0.065) 90%,rgba(20,20,30,0.09) 100%)"></div>
<div class="a" style="left:0;top:1413px;width:2943px;height:11px;background:#eceef2"></div>

</body></html>
